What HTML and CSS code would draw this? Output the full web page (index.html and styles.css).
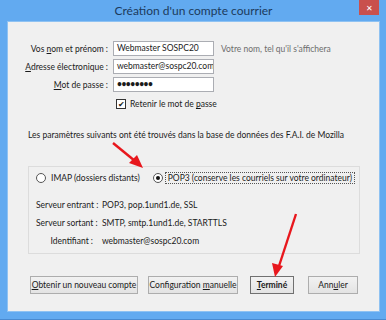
FILE: index.html
```html
<!DOCTYPE html>
<html lang="fr">
<head>
    <meta charset="UTF-8">
    <title>Création d'un compte courrier</title>
    <link rel="stylesheet" href="styles.css">
</head>
<body>

    <div class="window">
        <div class="titlebar">
            <span class="title">Création d'un compte courrier</span>
            <span class="close">&#x2715;</span>
        </div>

        <div class="client">
            <div class="account-form">
                <label class="field-label">Vos <u>n</u>om et prénom :</label>
                <div class="input">Webmaster SOSPC20</div>
                <span class="hint">Votre nom, tel qu'il s'affichera</span>

                <label class="field-label"><u>A</u>dresse électronique :</label>
                <div class="input">webmaster@sospc20.com</div>
                <span></span>

                <label class="field-label"><u>M</u>ot de passe :</label>
                <div class="input password">&#x2022;&#x2022;&#x2022;&#x2022;&#x2022;&#x2022;&#x2022;&#x2022;</div>
                <span></span>

                <div class="remember">
                    <span class="checkbox">&#x2714;</span>
                    <span>Retenir le mot de <u>p</u>asse</span>
                </div>
            </div>

            <p class="found">Les paramètres suivants ont été trouvés dans la base de données des F.A.I. de Mozilla</p>

            <div class="group">
                <div class="protocols">
                    <span class="radio"></span>
                    <span class="radio-label">IMAP (dossiers distants)</span>
                    <span class="radio checked"></span>
                    <span class="radio-label focused">POP3 (conserve les courriels sur votre ordinateur)</span>
                </div>
                <div class="servers">
                    <span class="server-label">Serveur entrant :</span>
                    <span>POP3, pop.1und1.de, SSL</span>
                    <span class="server-label">Serveur sortant :</span>
                    <span>SMTP, smtp.1und1.de, STARTTLS</span>
                    <span class="server-label">Identifiant :</span>
                    <span>webmaster@sospc20.com</span>
                </div>
            </div>

            <div class="buttons">
                <button class="btn btn-new"><u>O</u>btenir un nouveau compte</button>
                <button class="btn btn-manual">Configuration <u>m</u>anuelle</button>
                <button class="btn btn-done"><u>T</u>erminé</button>
                <button class="btn btn-cancel">Ann<u>u</u>ler</button>
            </div>
        </div>

        <svg class="arrows" width="386" height="320" viewBox="0 0 386 320">
            <line x1="113" y1="143" x2="135" y2="161" stroke="#e8171d" stroke-width="2.4"/>
            <polygon points="143,168 129,163 137,155" fill="#e8171d"/>
            <line x1="296" y1="214" x2="279" y2="266" stroke="#e8171d" stroke-width="2.4"/>
            <polygon points="275,277 272,263 283,266" fill="#e8171d"/>
        </svg>
    </div>

</body>
</html>
```

FILE: styles.css
```css
body {
    margin: 0;
    font-family: Lato, "Noto Sans", sans-serif;
    font-size: 8.5px;
    color: #1a1a1a;
    white-space: nowrap;
}
.window {
    position: relative;
    width: 386px;
    height: 320px;
    box-sizing: border-box;
    padding: 0 6px 7px 7px;
    background: #62aaf0;
    border-bottom: 1px solid #4a8ad0;
    display: flex;
    flex-direction: column;
}
.titlebar {
    height: 21px;
    display: flex;
    justify-content: center;
    align-items: center;
}
.title {
    font-size: 12px;
    color: #1c3a5c;
}
.close {
    position: absolute;
    top: 0;
    right: 7px;
    width: 20px;
    height: 15px;
    background: #c9504d;
    color: #fff;
    font-size: 8px;
    display: flex;
    justify-content: center;
    align-items: center;
}
.client {
    flex: 1;
    background: #f0f0f0;
    border: 1px solid #8fc2f2;
    padding-top: 19px;
}
.account-form {
    display: grid;
    grid-template-columns: 100px 101px auto;
    grid-auto-rows: 15px;
    row-gap: 3px;
    column-gap: 5px;
    align-items: center;
}
.field-label {
    text-align: right;
}
.input {
    height: 15px;
    box-sizing: border-box;
    border: 1px solid #abadb3;
    background: #fff;
    padding: 0 3px;
    line-height: 13px;
    overflow: hidden;
}
.password {
    font-weight: bold;
    letter-spacing: -0.5px;
}
.hint {
    color: #6d6d6d;
    margin-left: 2px;
}
.remember {
    grid-column: 2 / span 2;
    display: flex;
    align-items: center;
    gap: 4px;
    padding-left: 3px;
    margin-top: 3px;
}
.checkbox {
    width: 8px;
    height: 8px;
    border: 1px solid #333;
    background: #fff;
    font-size: 8px;
    line-height: 8px;
    text-align: center;
}
.found {
    margin: 20px 0 0 20px;
}
.group {
    margin: 26px 0 0 20px;
    width: 332px;
    height: 88px;
    box-sizing: border-box;
    border: 1px solid #dcdcdc;
    padding: 5px 0 0 7px;
}
.protocols {
    display: flex;
    align-items: center;
}
.radio {
    width: 8px;
    height: 8px;
    border: 1px solid #555;
    border-radius: 50%;
    background: #fff;
    display: flex;
    justify-content: center;
    align-items: center;
}
.radio.checked::after {
    content: '';
    width: 4px;
    height: 4px;
    border-radius: 50%;
    background: #111;
}
.radio-label {
    margin-left: 2px;
    margin-right: 10px;
    padding: 0 2px;
    border: 1px solid transparent;
}
.radio-label.focused {
    border: 1px dotted #555;
    margin-right: 0;
}
.servers {
    display: grid;
    grid-template-columns: 57px auto;
    grid-auto-rows: 18px;
    column-gap: 9px;
    align-items: center;
    margin-top: 12px;
}
.server-label {
    text-align: right;
}
.buttons {
    display: flex;
    margin: 22px 0 0 22px;
}
.btn {
    height: 18px;
    box-sizing: border-box;
    font-family: inherit;
    font-size: 8.5px;
    color: #1a1a1a;
    border: 1px solid #adadad;
    background: linear-gradient(#f2f2f2, #e3e3e3);
    padding: 0;
}
.btn-new {
    width: 108px;
}
.btn-manual {
    width: 90px;
    margin-left: 10px;
}
.btn-done {
    width: 44px;
    margin-left: 12px;
    font-weight: bold;
    border: 1px solid #707070;
}
.btn-cancel {
    width: 50px;
    margin-left: 14px;
}
.arrows {
    position: absolute;
    left: 0;
    top: 0;
    pointer-events: none;
}
```
